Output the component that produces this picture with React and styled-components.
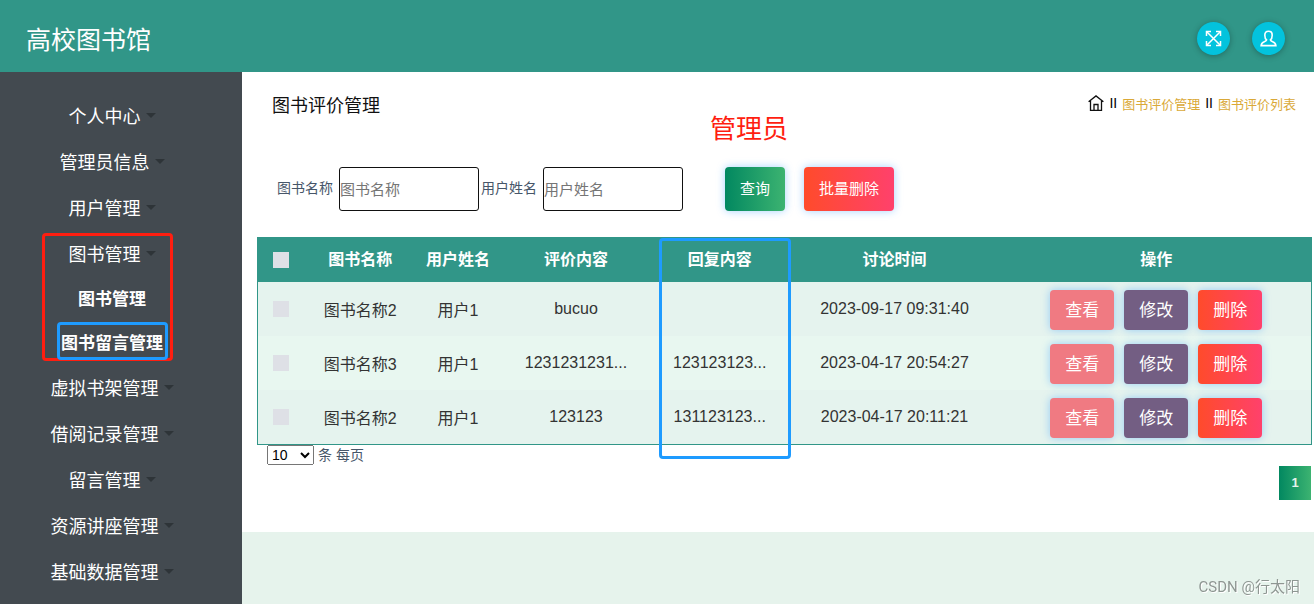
import React, { useState } from "react";
import styled, { createGlobalStyle } from "styled-components";

const GlobalStyle = createGlobalStyle`
  * {
    box-sizing: border-box;
  }
  body {
    margin: 0;
    font-family: "Liberation Sans", "Noto Sans CJK SC", sans-serif;
    background-color: #e6f3ec;
  }
  button, input, select {
    font-family: inherit;
  }
`;

const Page = styled.div`
  display: flex;
  flex-direction: column;
  min-height: 100vh;
`;

const Header = styled.header`
  display: flex;
  align-items: center;
  justify-content: space-between;
  height: 72px;
  padding: 4px 29px 0 26px;
  background-color: #319688;
`;

const Logo = styled.h1`
  margin: 0;
  font-size: 25px;
  font-weight: 400;
  color: #fff;
`;

const HeaderActions = styled.div`
  display: flex;
  gap: 22px;
`;

const RoundButton = styled.button`
  display: flex;
  align-items: center;
  justify-content: center;
  width: 33px;
  height: 33px;
  padding: 0;
  border: none;
  border-radius: 50%;
  background-color: #03c3dd;
  box-shadow: 0 1px 6px rgba(0, 0, 0, 0.3);
  cursor: pointer;
`;

const Body = styled.div`
  display: flex;
  flex: 1;
`;

const Sidebar = styled.nav`
  flex: none;
  width: 242px;
  padding: 21px 18px 8px 0;
  background-color: #434a50;
`;

const Menu = styled.ul`
  margin: 0;
  padding: 0;
  list-style: none;
`;

const MenuItem = styled.li`
  position: relative;
`;

const MenuButton = styled.button`
  display: flex;
  align-items: center;
  justify-content: center;
  gap: 5px;
  width: 100%;
  height: 46px;
  padding: 0 0 2px;
  border: none;
  background: none;
  font-size: 18px;
  color: #fff;
  cursor: pointer;
`;

const Caret = styled.span`
  border: 5px solid transparent;
  border-top-color: #2e3438;
  border-bottom: none;
`;

const SubLink = styled.a`
  display: flex;
  align-items: center;
  justify-content: center;
  height: 44px;
  padding-bottom: 4px;
  font-size: 17px;
  font-weight: 700;
  color: #fff;
  text-decoration: none;
`;

const Mark = styled.span`
  position: absolute;
  border: 3px solid ${(props) => props.$color};
  border-radius: 4px;
  pointer-events: none;
`;

const GroupMark = styled(Mark)`
  top: 2px;
  left: 42px;
  width: 131px;
  height: 128px;
`;

const LinkMark = styled(Mark)`
  z-index: 1;
  top: 1px;
  left: 57px;
  width: 111px;
  height: 38px;
`;

const ColumnMark = styled(Mark)`
  z-index: 1;
  top: 0;
  left: 7px;
  right: -3px;
  height: 221px;
`;

const Main = styled.main`
  flex: 1;
  min-width: 0;
`;

const Panel = styled.section`
  position: relative;
  padding: 0 2px 32px 15px;
  background-color: #fff;
`;

const TitleBar = styled.div`
  display: flex;
  align-items: center;
  justify-content: space-between;
  height: 64px;
  padding: 0 16px 0 15px;
`;

const Title = styled.h2`
  margin: 0;
  font-size: 18px;
  font-weight: 400;
  color: #111;
`;

const Breadcrumb = styled.nav`
  display: flex;
  align-items: center;
  gap: 5px;
  padding-bottom: 2px;
  font-size: 13px;
  color: #111;

  a {
    color: #daa938;
    text-decoration: none;
  }
`;

const Separator = styled.span`
  font-size: 14px;
  color: #000;
`;

const RoleNote = styled.span`
  position: absolute;
  top: 38px;
  left: 468px;
  font-size: 26px;
  line-height: 38px;
  color: #ff1e10;
`;

const SearchBar = styled.form`
  display: flex;
  align-items: center;
  padding: 31px 20px 26px;
`;

const Field = styled.div`
  display: flex;
  align-items: center;
  gap: 6px;
  margin-right: 2px;
`;

const FieldLabel = styled.label`
  padding-bottom: 4px;
  font-size: 14px;
  color: #475669;
`;

const TextInput = styled.input`
  width: 140px;
  height: 44px;
  padding: 0;
  border: 1px solid #111;
  border-radius: 3px;
  font-size: 15px;

  &::placeholder {
    color: #757575;
  }
`;

const Buttons = styled.div`
  display: flex;
  gap: 19px;
  margin-left: 40px;
`;

const backgrounds = {
  query: "linear-gradient(to right, #028860, #3cb371)",
  danger: "linear-gradient(to right, #ff4b2b, #ff416c)",
  view: "#f07a82",
  edit: "#735e83",
};

const Button = styled.button`
  height: ${(props) => (props.$small ? "40px" : "44px")};
  padding: 0 15px 4px;
  border: none;
  border-radius: 4px;
  background: ${(props) => backgrounds[props.$kind]};
  box-shadow: 0 0 8px rgba(30, 144, 255, 0.4);
  font-size: ${(props) => (props.$small ? "17px" : "15px")};
  color: #fff;
  cursor: pointer;
`;

const Table = styled.table`
  width: 100%;
  table-layout: fixed;
  border: 1px solid #319688;
  border-spacing: 0;
  font-size: 16px;
  color: #333;
  text-align: center;
`;

const Th = styled.th`
  position: relative;
  height: 44px;
  padding: 0 0 4px;
  background-color: #319688;
  color: #fff;
`;

const CheckTh = styled(Th)`
  padding: 0;
`;

const Row = styled.tr`
  background-color: #e5f3ee;

  &:nth-child(even) {
    background-color: #e8f7f0;
  }
`;

const Td = styled.td`
  height: 54px;
  padding: 0;
`;

const Checkbox = styled.input`
  display: block;
  width: 16px;
  height: 16px;
  margin: 0 auto;
  appearance: none;
  background-color: #dee0e6;
`;

const RowActions = styled.div`
  display: flex;
  justify-content: center;
  gap: 10px;
  padding-top: 2px;
`;

const PageSize = styled.label`
  display: flex;
  align-items: center;
  gap: 4px;
  padding-left: 10px;
  font-size: 14px;
  line-height: 20px;
  color: #475669;

  select {
    width: 47px;
    height: 20px;
    font-size: 14px;
  }
`;

const Pager = styled.div`
  display: flex;
  justify-content: flex-end;
  padding: 1px 1px 0;
`;

const PageButton = styled.button`
  width: 32px;
  height: 34px;
  padding: 0 0 2px;
  border: none;
  background: ${backgrounds.query};
  font-size: 13px;
  font-weight: 700;
  color: #e6f3ec;
`;

const Watermark = styled.span`
  position: fixed;
  right: 14px;
  bottom: 6px;
  font-family: Roboto, "Noto Sans CJK SC", sans-serif;
  font-size: 15px;
  line-height: 22px;
  color: #8e9692;
  text-shadow: 1px 1px 0 #fff;
`;

const menu = [
  { name: "个人中心" },
  { name: "管理员信息" },
  { name: "用户管理" },
  { name: "图书管理", children: ["图书管理", "图书留言管理"] },
  { name: "虚拟书架管理" },
  { name: "借阅记录管理" },
  { name: "留言管理" },
  { name: "资源讲座管理" },
  { name: "基础数据管理" },
];

const columns = [
  { name: "图书名称", width: "10.6%" },
  { name: "用户姓名", width: "8%" },
  { name: "评价内容", width: "14.4%" },
  { name: "回复内容", width: "12.9%", marked: true },
  { name: "讨论时间", width: "20.3%" },
  { name: "操作", width: "29.4%" },
];

const rows = [
  ["图书名称2", "用户1", "bucuo", "", "2023-09-17 09:31:40"],
  ["图书名称3", "用户1", "1231231231...", "123123123...", "2023-04-17 20:54:27"],
  ["图书名称2", "用户1", "123123", "131123123...", "2023-04-17 20:11:21"],
];

function ExpandIcon() {
  return (
    <svg width="17" height="17" viewBox="0 0 17 17" fill="none" stroke="#fff" strokeWidth="1.5">
      <path d="M2 2l13 13M15 2L2 15" />
      <path d="M1.5 6V1.5H6M11 1.5h4.5V6M15.5 11v4.5H11M6 15.5H1.5V11" />
    </svg>
  );
}

function UserIcon() {
  return (
    <svg width="17" height="17" viewBox="0 0 18 18" fill="none" stroke="#fff" strokeWidth="1.7">
      <path d="M7 10.5C5.6 9.5 5.1 7.8 5.1 5.5 5.1 2.8 6.5 1.3 9 1.3s3.9 1.5 3.9 4.2c0 2.3-.5 4-1.9 5 .1 1 .8 1.3 2.4 1.9 2.100.8 3.2 1.700 3.4 4.1H1.2c.2-2.4 1.3-3.3 3.4-4.1 1.6-.6 2.3-.9 2.4-1.9z" />
    </svg>
  );
}

function HomeIcon() {
  return (
    <svg width="16" height="16" viewBox="0 0 16 16" fill="none" stroke="#111" strokeWidth="1.3">
      <path d="M.6 6.8L8 .9l7.4 5.9M2.5 5.6v9.8h11V5.6M6 15V9.5h4V15" />
    </svg>
  );
}

function App() {
  const [pageSize, setPageSize] = useState("10");

  return (
    <Page>
      <GlobalStyle />
      <Header>
        <Logo>高校图书馆</Logo>
        <HeaderActions>
          <RoundButton type="button" aria-label="全屏">
            <ExpandIcon />
          </RoundButton>
          <RoundButton type="button" aria-label="用户">
            <UserIcon />
          </RoundButton>
        </HeaderActions>
      </Header>
      <Body>
        <Sidebar>
          <Menu>
            {menu.map((item) => (
              <MenuItem key={item.name}>
                <MenuButton type="button">
                  {item.name}
                  <Caret />
                </MenuButton>
                {item.children && (
                  <>
                    <Menu>
                      {item.children.map((child, i) => (
                        <MenuItem key={child}>
                          <SubLink href="#">{child}</SubLink>
                          {i === 1 && <LinkMark $color="#1e9bff" />}
                        </MenuItem>
                      ))}
                    </Menu>
                    <GroupMark $color="#ff1e10" />
                  </>
                )}
              </MenuItem>
            ))}
          </Menu>
        </Sidebar>
        <Main>
          <Panel>
            <TitleBar>
              <Title>图书评价管理</Title>
              <Breadcrumb>
                <HomeIcon />
                <Separator>II</Separator>
                <a href="#">图书评价管理</a>
                <Separator>II</Separator>
                <a href="#">图书评价列表</a>
              </Breadcrumb>
            </TitleBar>
            <RoleNote>管理员</RoleNote>
            <SearchBar onSubmit={(e) => e.preventDefault()}>
              <Field>
                <FieldLabel htmlFor="bookName">图书名称</FieldLabel>
                <TextInput id="bookName" type="text" placeholder="图书名称" />
              </Field>
              <Field>
                <FieldLabel htmlFor="userName">用户姓名</FieldLabel>
                <TextInput id="userName" type="text" placeholder="用户姓名" />
              </Field>
              <Buttons>
                <Button type="submit" $kind="query">
                  查询
                </Button>
                <Button type="button" $kind="danger">
                  批量删除
                </Button>
              </Buttons>
            </SearchBar>
            <Table>
              <colgroup>
                <col width="4.4%" />
                {columns.map((col) => (
                  <col key={col.name} width={col.width} />
                ))}
              </colgroup>
              <thead>
                <tr>
                  <CheckTh>
                    <Checkbox type="checkbox" aria-label="全选" />
                  </CheckTh>
                  {columns.map((col) => (
                    <Th key={col.name}>
                      {col.name}
                      {col.marked && <ColumnMark $color="#1e9bff" />}
                    </Th>
                  ))}
                </tr>
              </thead>
              <tbody>
                {rows.map((row, i) => (
                  <Row key={i}>
                    <Td>
                      <Checkbox type="checkbox" aria-label={row[0]} />
                    </Td>
                    {row.map((text, j) => (
                      <Td key={j}>{text}</Td>
                    ))}
                    <Td>
                      <RowActions>
                        <Button type="button" $small $kind="view">
                          查看
                        </Button>
                        <Button type="button" $small $kind="edit">
                          修改
                        </Button>
                        <Button type="button" $small $kind="danger">
                          删除
                        </Button>
                      </RowActions>
                    </Td>
                  </Row>
                ))}
              </tbody>
            </Table>
            <PageSize>
              <select value={pageSize} onChange={(e) => setPageSize(e.target.value)}>
                <option>10</option>
                <option>20</option>
                <option>50</option>
              </select>
              条 每页
            </PageSize>
            <Pager>
              <PageButton type="button">1</PageButton>
            </Pager>
          </Panel>
        </Main>
      </Body>
      <Watermark>CSDN @行太阳</Watermark>
    </Page>
  );
}

export default App;
